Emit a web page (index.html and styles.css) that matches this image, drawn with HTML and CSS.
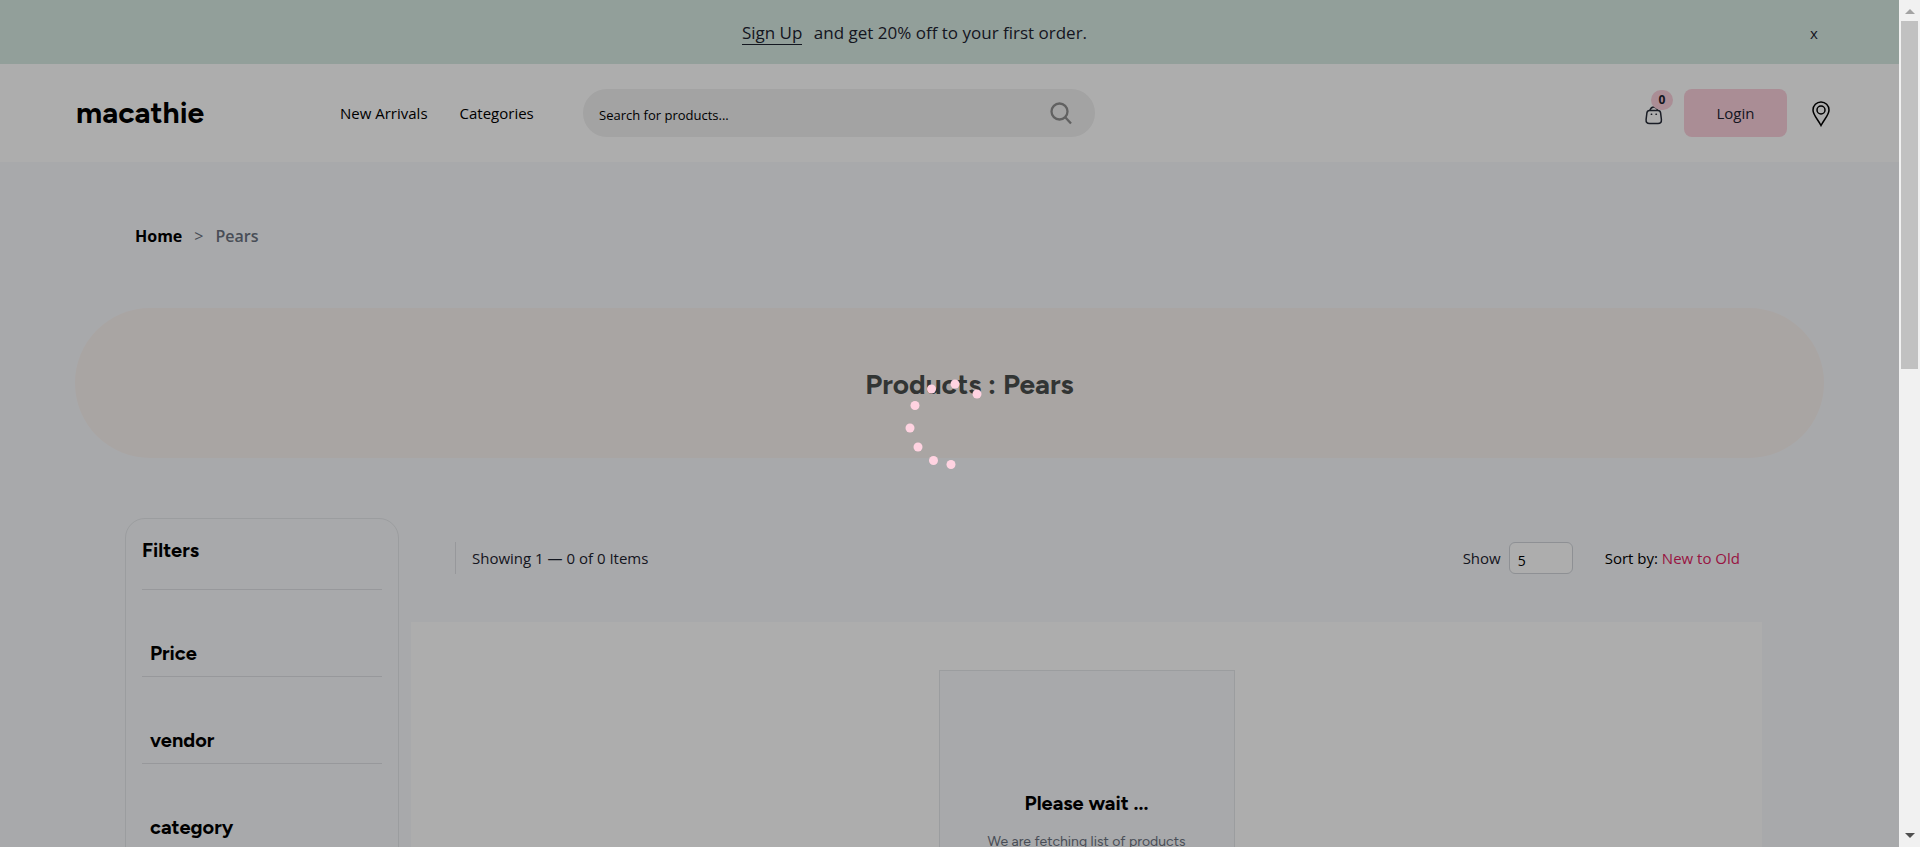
FILE: index.html
```html
<!DOCTYPE html>
<html lang="en">
<head>
<meta charset="utf-8">
<meta name="viewport" content="width=device-width, initial-scale=1">
<title>macathie - Pears</title>
<link rel="stylesheet" href="styles.css">
</head>
<body>
<div class="viewport">
  <div class="page">
    <div class="promo">
      <p class="promo-text"><a class="promo-link" href="#signup">Sign Up</a> and get 20% off to your first order.</p>
      <button class="promo-close" type="button" aria-label="Close">x</button>
    </div>
    <header class="header">
      <a class="logo" href="#home">macathie</a>
      <nav class="nav">
        <a href="#new">New Arrivals</a>
        <a href="#categories">Categories</a>
      </nav>
      <form class="search">
        <input class="search-input" type="search" placeholder="Search for products..." aria-label="Search for products">
        <button class="search-button" type="button" aria-label="Search">
          <svg width="24" height="24" viewBox="0 0 24 24" fill="none" stroke="#8f8f8f" stroke-width="2.300"><circle cx="10.500" cy="10.500" r="8"/><path d="M16 16L22 22.500"/></svg>
        </button>
      </form>
      <div class="actions">
        <a class="bag" href="#cart" aria-label="Cart">
          <svg width="18" height="20" viewBox="0 0 18 20" fill="none" stroke="#272c38" stroke-width="1.500" stroke-linecap="round"><path d="M4.500 5.500h8.500c1.700 0 2.400 1 2.600 2.400l.8 6.600c.2 2.600-.8 4-3.400 4h-8.500c-2.600 0-3.600-1.400-3.400-4l.8-6.600c.2-1.400.9-2.400 2.600-2.400z"/><path d="M5 5C5.800 3 7 2 8.800 2s3 1 3.800 3M6.300 9.300h.4M11 9.300h.4"/></svg>
          <span class="badge">0</span>
        </a>
        <button class="login" type="button">Login</button>
        <a class="pin" href="#stores" aria-label="Store locator">
          <svg width="18" height="26" viewBox="0 0 18 26" fill="none" stroke="#000" stroke-width="1.500"><path d="M9 24.500C6 18.500 1 14 1 9a8 8 0 0 1 16 0c0 5-5 9.500-8 15.500z"/><circle cx="9" cy="9" r="4"/></svg>
        </a>
      </div>
    </header>
    <nav class="crumbs" aria-label="Breadcrumb">
      <a class="crumb-home" href="#home">Home</a><span class="crumb-sep">&gt;</span><span class="crumb-now">Pears</span>
    </nav>
    <section class="banner"><h1 class="banner-title">Products : Pears</h1></section>
    <main class="catalog">
      <aside class="filters">
        <h2 class="filters-title">Filters</h2>
        <h3 class="filter">Price</h3>
        <h3 class="filter">vendor</h3>
        <h3 class="filter">category</h3>
      </aside>
      <section class="results">
        <div class="toolbar">
          <p class="count">Showing 1 — 0 of 0 Items</p>
          <label class="show-label" for="per-page">Show</label>
          <input class="show-input" id="per-page" type="text" value="5">
          <p class="sort">Sort by: <a class="sort-link" href="#sort">New to Old</a></p>
        </div>
        <div class="panel">
          <div class="notice">
            <h3 class="notice-title">Please wait ...</h3>
            <p class="notice-text">We are fetching list of products</p>
          </div>
        </div>
      </section>
    </main>
    <div class="overlay" role="status" aria-label="Loading">
      <svg class="spinner" width="90" height="96" viewBox="0 0 90 96" fill="#ffd3e1"><circle cx="5" cy="52" r="4.500"/><circle cx="10" cy="29.500" r="4.500"/><circle cx="26.500" cy="13" r="4.500"/><circle cx="50" cy="8" r="4.500"/><circle cx="72" cy="18" r="4.500"/><circle cx="13" cy="71" r="4.500"/><circle cx="28.500" cy="84.500" r="4.500"/><circle cx="46" cy="88.500" r="4.500"/></svg>
    </div>
  </div>
  <div class="scrollbar" aria-hidden="true">
    <span class="arrow arrow-up"></span>
    <span class="thumb"></span>
    <span class="arrow arrow-down"></span>
  </div>
</div>
</body>
</html>
```

FILE: styles.css
```css
* { box-sizing: border-box; }
body, h1, h2, h3, p { margin: 0; }
body {
  font-family: "Open Sans", "Noto Sans", sans-serif;
  font-size: 15px;
  line-height: 24px;
  color: #1d2330;
}
a { color: inherit; text-decoration: none; }
button, input { font: inherit; color: inherit; }
button { border: 0; padding: 0; background: none; }
svg { display: block; }

.viewport { display: flex; height: 100vh; overflow: hidden; }
.page { position: relative; flex: 1; min-width: 0; overflow: hidden; background: #f8fafc; }

.promo {
  display: flex;
  align-items: center;
  height: 64px;
  padding: 2px 80px 0 20px;
  background: #d7ebe4;
}
.promo-text { flex: 1; text-align: center; font-size: 17px; }
.promo-link { margin-right: 7px; border-bottom: 1px solid #1d2330; }
.promo-close { width: 10px; }

.header {
  display: flex;
  align-items: center;
  height: 98px;
  padding: 0 69px 0 76px;
  background: #fff;
  color: #000;
}
.logo { flex: 0 0 264px; font: 700 30px/36px Figtree, Lato, sans-serif; }
.nav { display: flex; flex: 0 0 243px; gap: 32px; }
.search {
  display: flex;
  align-items: center;
  flex: 0 1 512px;
  height: 48px;
  padding: 0 22px 0 16px;
  border-radius: 24px;
  background: #f0f0f0;
}
.search-input {
  flex: 1;
  min-width: 0;
  border: 0;
  padding: 4px 0 0;
  outline: 0;
  background: none;
  font-size: 13px;
}
.search-input::placeholder { color: #000; opacity: 1; }
.actions { display: flex; align-items: center; margin-left: auto; }
.bag { position: relative; margin-right: 21px; padding-top: 4px; }
.badge {
  position: absolute;
  top: -11px;
  left: 6px;
  width: 22px;
  height: 20px;
  border-radius: 10px;
  background: #fbd0dc;
  color: #1d2330;
  font-size: 12px;
  font-weight: 700;
  line-height: 20px;
  text-align: center;
}
.login {
  width: 103px;
  height: 48px;
  margin-right: 25px;
  border-radius: 8px;
  background: #fbd0dc;
  color: #1d2330;
}
.pin { padding-top: 2px; }

.crumbs { display: flex; padding: 62px 135px 0; font-size: 16px; font-weight: 600; }
.crumb-home { color: #000; font-weight: 700; }
.crumb-sep { margin: 0 12px; color: #6b7280; font-weight: 400; }
.crumb-now { color: #6b7280; }

.banner {
  display: flex;
  align-items: center;
  justify-content: center;
  height: 150px;
  margin: 60px 75px;
  padding: 2px 0 0 40px;
  border-radius: 75px;
  background: #faf3f1;
}
.banner-title { color: #4b4f4d; font: 700 28px/36px Figtree, Lato, sans-serif; }

.catalog { display: flex; gap: 12px; padding: 0 137px 0 125px; }
.filters {
  flex: 0 0 274px;
  height: 640px;
  padding: 16px;
  border: 1px solid #e5e7eb;
  border-radius: 20px;
}
.filters-title, .filter, .notice-title { color: #000; font: 700 20px/30px Figtree, Lato, sans-serif; }
.filters-title { height: 55px; border-bottom: 1px solid #dfe1e5; }
.filter { height: 87px; padding: 48px 8px 0; border-bottom: 1px solid #dfe1e5; }

.results { flex: 1; min-width: 0; }
.toolbar { display: flex; align-items: center; padding: 24px 22px 48px 44px; }
.count { flex: 1; padding: 4px 16px; border-left: 1px solid #dfe1e5; }
.show-input {
  width: 64px;
  height: 32px;
  margin: 0 32px 0 8px;
  padding: 4px 8px 0;
  border: 1px solid #d1d5db;
  border-radius: 6px;
  background: #fff;
  color: #000;
  font-size: 14px;
}
.sort { color: #000; }
.sort-link { color: #e11d62; }
.panel { min-height: 500px; padding-top: 48px; background: #fff; }
.notice {
  width: 296px;
  height: 320px;
  margin: 0 auto;
  padding-top: 117px;
  border: 1px solid #e5e7eb;
  background: #f8fafc;
  text-align: center;
}
.notice-text { margin-top: 12px; color: #6b7280; font: 400 14px/24px Figtree, Lato, sans-serif; }

.overlay {
  position: absolute;
  inset: 0;
  display: flex;
  align-items: center;
  justify-content: center;
  background: rgba(0, 0, 0, 0.32);
}

.scrollbar {
  display: flex;
  flex-direction: column;
  align-items: center;
  flex: 0 0 21px;
  padding: 9px 0;
  background: #f1f1f1;
}
.arrow { border: 5px solid transparent; }
.arrow-up { border-top: 0; border-bottom-color: #a3a3a3; }
.arrow-down { margin-top: auto; border-bottom: 0; border-top-color: #505050; }
.thumb { width: 17px; height: 348px; margin-top: 7px; background: #c1c1c1; }
```
